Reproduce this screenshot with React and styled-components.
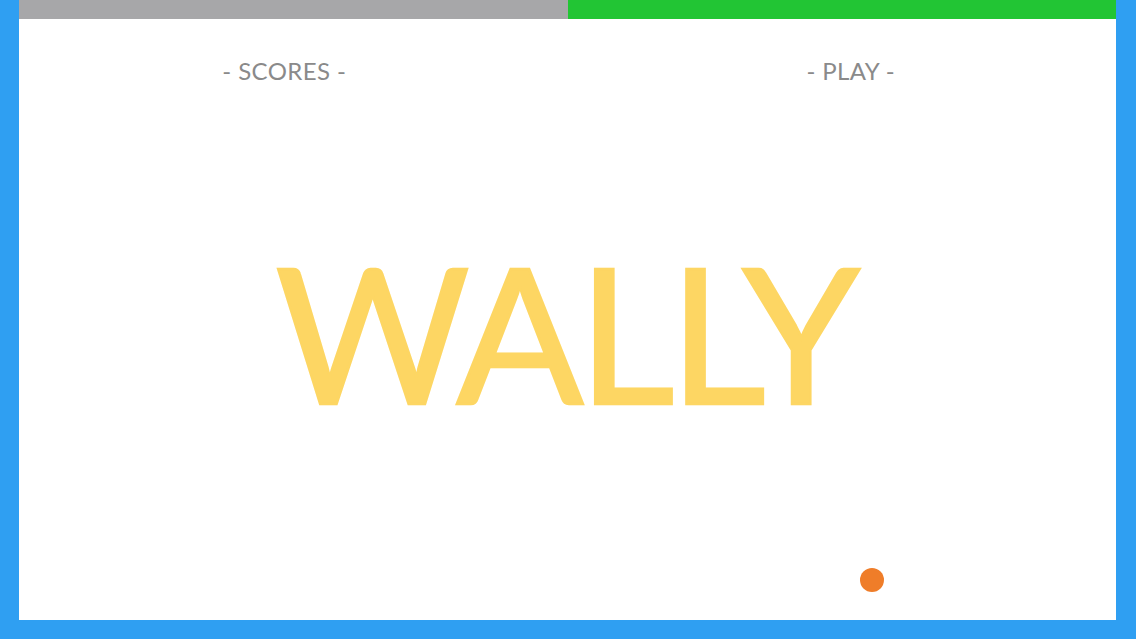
import React from "react";
import styled, { createGlobalStyle } from "styled-components";

const GlobalStyle = createGlobalStyle`
    html, body {
        margin: 0;
        padding: 0;
        height: 100%;
    }
    body {
        font-family: Lato, "Noto Sans", "Liberation Sans", sans-serif;
    }
`;

const Frame = styled.div`
    box-sizing: border-box;
    width: 100vw;
    height: 100vh;
    padding: 0 20px 19px 19px;
    background-color: #2f9ff2;
    display: flex;
`;

const Board = styled.div`
    position: relative;
    flex: 1;
    background-color: #ffffff;
    display: flex;
    flex-direction: column;
    overflow: hidden;
`;

const ProgressBar = styled.div`
    display: flex;
    height: 19px;
`;

const ProgressSegment = styled.div`
    flex: 1;
    background-color: ${(p) => p.color};
`;

const Menu = styled.nav`
    display: grid;
    grid-template-columns: 1fr 1fr;
    padding-top: 38px;
`;

const MenuItem = styled.a`
    text-align: center;
    font-size: 24px;
    font-weight: 400;
    color: #8a8a8a;
    letter-spacing: 0.4px;
    line-height: 28px;
    cursor: pointer;
    padding-left: ${(p) => (p.side === "right" ? "18px" : "0")};
    padding-right: ${(p) => (p.side === "left" ? "18px" : "0")};
`;

const Title = styled.h1`
    margin: 0;
    margin-top: 146px;
    text-align: center;
    font-size: 188px;
    font-weight: 400;
    line-height: 200px;
    letter-spacing: -5.5px;
    text-indent: -5.5px;
    color: #fdd663;
    -webkit-text-stroke: 2.5px #fdd663;
`;

const Ball = styled.div`
    position: absolute;
    left: ${(p) => p.x - 12}px;
    top: ${(p) => p.y - 12}px;
    width: 24px;
    height: 24px;
    border-radius: 50%;
    background-color: #ef7d29;
`;

export default function App() {
    return (
        <>
            <GlobalStyle />
            <Frame>
                <Board>
                    <ProgressBar>
                        <ProgressSegment color="#a7a7a9" />
                        <ProgressSegment color="#22c534" />
                    </ProgressBar>
                    <Menu>
                        <MenuItem side="left">- SCORES -</MenuItem>
                        <MenuItem side="right">- PLAY -</MenuItem>
                    </Menu>
                    <Title>WALLY</Title>
                    <Ball x={853} y={580} />
                </Board>
            </Frame>
        </>
    );
}
